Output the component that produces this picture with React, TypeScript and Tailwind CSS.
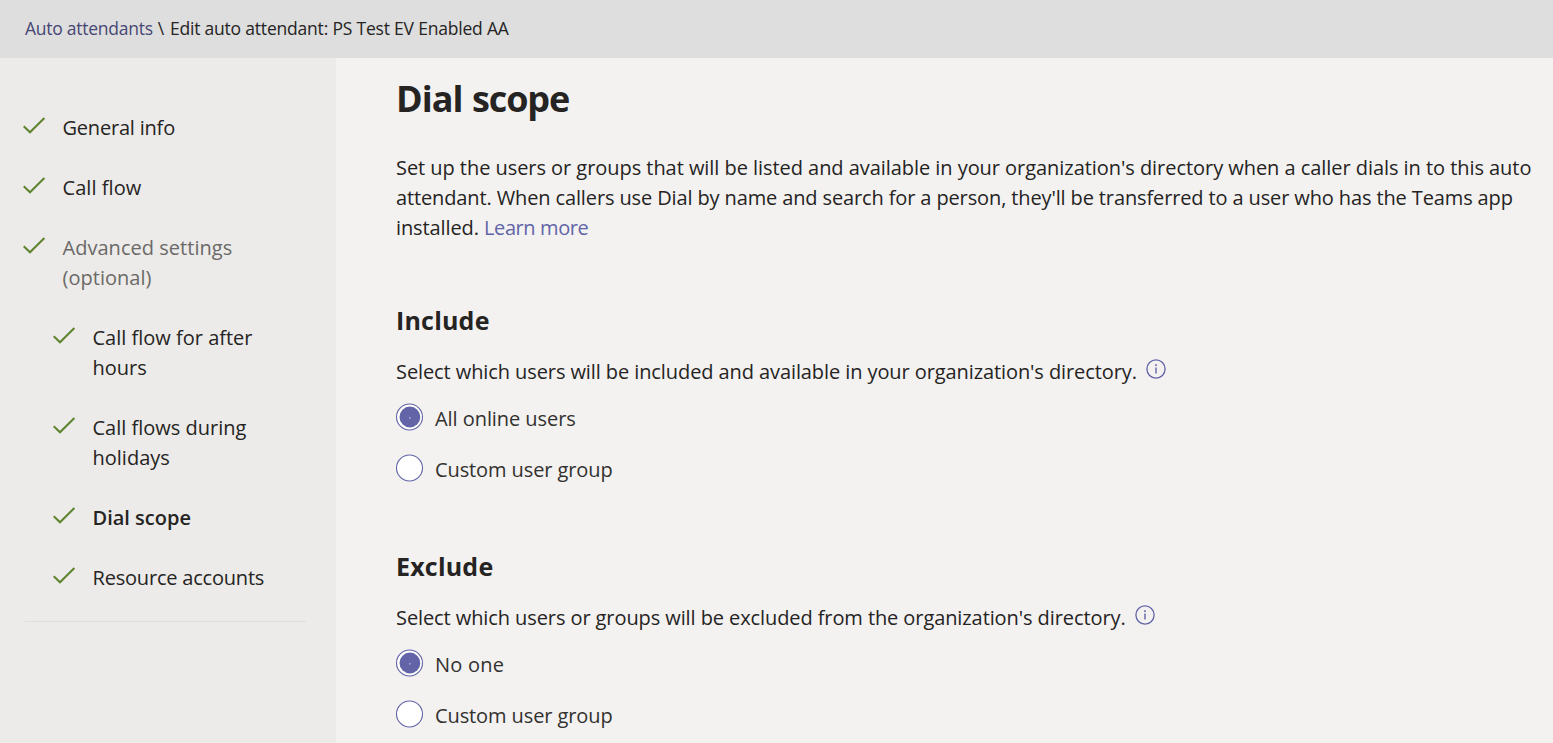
import React, { useState } from "react";

type Step = { label: string[]; nested?: boolean; muted?: boolean; current?: boolean; tracking: string };

const steps: Step[] = [
  { label: ["General info"], tracking: "tracking-[-0.2px]" },
  { label: ["Call flow"], tracking: "tracking-[0.05px]" },
  { label: ["Advanced settings", "(optional)"], muted: true, tracking: "tracking-[0.03px]" },
  { label: ["Call flow for after", "hours"], nested: true, tracking: "tracking-[0px]" },
  { label: ["Call flows during", "holidays"], nested: true, tracking: "tracking-[0px]" },
  { label: ["Dial scope"], nested: true, current: true, tracking: "tracking-[0px]" },
  { label: ["Resource accounts"], nested: true, tracking: "tracking-[-0.2px]" },
];

function Lines({ lines }: { lines: string[] }) {
  return (
    <>
      {lines.map((line) => (
        <span key={line} className="block whitespace-nowrap">
          {line}
        </span>
      ))}
    </>
  );
}

function Check() {
  return (
    <svg className="mt-[4px] h-[18px] w-[23px] shrink-0" viewBox="0 0 23 18" fill="none" stroke="#5f8530" strokeWidth="2.1">
      <path d="M0.7 9.2 L7 15.2 L21.4 1" />
    </svg>
  );
}

function Info() {
  return (
    <svg className="h-5 w-5 shrink-0" viewBox="0 0 20 20" fill="none" stroke="#6264a7">
      <circle cx="10" cy="10" r="9.1" strokeWidth="1.3" />
      <path d="M10 8.5 V14.6" strokeWidth="1.4" />
      <path d="M10 5.3 V7" strokeWidth="1.6" />
    </svg>
  );
}

type Option = { label: string; tracking: string };

function Radio({ checked, option, onSelect }: { checked: boolean; option: Option; onSelect: () => void }) {
  return (
    <button type="button" role="radio" aria-checked={checked} onClick={onSelect} className="flex h-[30px] items-start">
      <svg className="h-7 w-7 shrink-0 overflow-visible" viewBox="0 0.5 28 28">
        <circle cx="13.5" cy="13.5" r="13" fill="#fff" stroke="#6264a7" strokeWidth="1.1" />
        {checked && <circle cx="13.9" cy="13.5" r="10.4" fill="#6264a7" />}
        {checked && <rect x="13" y="13.5" width="1.6" height="1.6" fill="#a6a7d0" />}
      </svg>
      <span className={`ml-[11px] whitespace-nowrap text-[#323130] ${option.tracking}`}>{option.label}</span>
    </button>
  );
}

type ChoiceProps = { title: string; text: string; tracking: string; options: Option[] };

function Choice({ title, text, tracking, options }: ChoiceProps) {
  const [selected, setSelected] = useState(0);
  return (
    <section>
      <h2 className="text-[25px] leading-[36px] font-bold tracking-[0.2px]">{title}</h2>
      <div className="mt-[19px] flex h-[30px] items-start gap-[9px]">
        <p className={`whitespace-nowrap ${tracking}`}>{text}</p>
        <span className="pt-[2px]">
          <Info />
        </span>
      </div>
      <div role="radiogroup" className="mt-[17px] flex flex-col gap-[21px]">
        {options.map((option, i) => (
          <Radio key={option.label} option={option} checked={i === selected} onSelect={() => setSelected(i)} />
        ))}
      </div>
    </section>
  );
}

export default function App() {
  return (
    <div className="flex h-[743px] w-[1553px] flex-col overflow-hidden bg-[#f3f2f1] font-['Open_Sans','Noto_Sans',sans-serif] text-[20px] leading-[30px] text-[#252423]">
      <header className="flex h-[58px] shrink-0 items-center bg-[#dedede] pb-[2px] pl-[25px] text-[17.5px] whitespace-pre">
        <a className="tracking-[-0.26px] text-[#464775]">Auto attendants</a>
        <span className="tracking-[0.55px]"> \ </span>
        <span className="tracking-[-0.2px]">Edit auto attendant: PS Test EV Enabled AA</span>
      </header>
      <div className="flex min-h-0 flex-1">
        <aside className="w-[336px] shrink-0 bg-[#ecebe9] pt-[55px]">
          <nav className="ml-[23px] flex flex-col gap-[30px]">
            {steps.map((step) => (
              <div key={step.label[0]} className={step.nested ? "ml-[30px] flex" : "flex"}>
                <Check />
                <div
                  className={`ml-[16.5px] ${step.tracking} ${step.current ? "font-semibold" : ""} ${
                    step.muted ? "text-[#6b6967]" : ""
                  }`}
                >
                  <Lines lines={step.label} />
                </div>
              </div>
            ))}
          </nav>
          <hr className="mt-[28px] ml-[25px] w-[281px] border-[#dfdedd]" />
        </aside>
        <main className="pt-[16px] pl-[60px]">
          <h1 className="text-[36px] leading-[50px] font-bold tracking-[-0.95px]">
            Dial <span className="ml-[1px] tracking-[-1.1px]">scope</span>
          </h1>
          <p className="mt-[29px] whitespace-nowrap">
            <span className="block tracking-[-0.05px]">
              Set up the users or groups that will be listed and available in your organization's directory when a caller dials in to this auto
            </span>
            <span className="block tracking-[-0.125px]">
              attendant. When callers use Dial by name and search for a person, they'll be transferred to a user who has the Teams app
            </span>
            <span className="block tracking-[-0.1px]">
              installed. <a className="tracking-[-0.4px] text-[#6264a7]">Learn more</a>
            </span>
          </p>
          <div className="mt-[59px] flex flex-col gap-[63px]">
            <Choice
              title="Include"
              text="Select which users will be included and available in your organization's directory."
              tracking="tracking-[-0.09px]"
              options={[
                { label: "All online users", tracking: "tracking-[-0.06px]" },
                { label: "Custom user group", tracking: "tracking-[-0.1px]" },
              ]}
            />
            <Choice
              title="Exclude"
              text="Select which users or groups will be excluded from the organization's directory."
              tracking="tracking-[-0.09px]"
              options={[
                { label: "No one", tracking: "tracking-[0.25px]" },
                { label: "Custom user group", tracking: "tracking-[-0.1px]" },
              ]}
            />
          </div>
        </main>
      </div>
    </div>
  );
}
